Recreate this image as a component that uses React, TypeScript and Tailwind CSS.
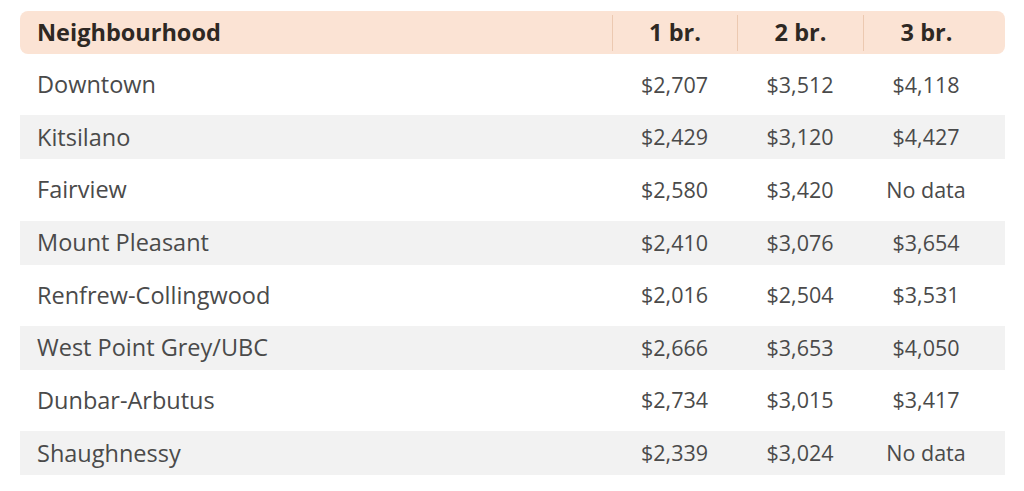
const rows = [
  ['Downtown', '$2,707', '$3,512', '$4,118'],
  ['Kitsilano', '$2,429', '$3,120', '$4,427'],
  ['Fairview', '$2,580', '$3,420', 'No data'],
  ['Mount Pleasant', '$2,410', '$3,076', '$3,654'],
  ['Renfrew-Collingwood', '$2,016', '$2,504', '$3,531'],
  ['West Point Grey/UBC', '$2,666', '$3,653', '$4,050'],
  ['Dunbar-Arbutus', '$2,734', '$3,015', '$3,417'],
  ['Shaughnessy', '$2,339', '$3,024', 'No data'],
]

export default function App() {
  return (
    <div className="w-[1024px] h-[491px] bg-white pt-[11px] pl-5 pr-[19px] font-['Open_Sans',sans-serif] text-[21.5px]">
      <div className="flex flex-col gap-[8.67px]">
        {/* header */}
        <div className="flex h-[43px] items-center rounded-lg bg-[#fbe3d4] pr-4 font-bold text-[#2e2823] text-[23.5px]">
          <div className="flex-1 pl-[17px]">Neighbourhood</div>
          <div className="flex h-[36px] w-[125px] items-center justify-center border-l border-[#ecc9b1]">1 br.</div>
          <div className="flex h-[36px] w-[126px] items-center justify-center border-l border-[#ecc9b1]">2 br.</div>
          <div className="flex h-[36px] w-[126px] items-center justify-center border-l border-[#ecc9b1]">3 br.</div>
        </div>

        {rows.map((r, i) => (
          <div
            key={r[0]}
            className={`flex h-[44px] items-center pr-4 text-[#4a4a4a] ${i % 2 === 1 ? 'bg-[#f2f2f2]' : 'bg-white'}`}
          >
            <div className="flex-1 pl-[17px] text-[23.5px]">{r[0]}</div>
            <div className="w-[125px] text-center">{r[1]}</div>
            <div className="w-[126px] text-center">{r[2]}</div>
            <div className="w-[126px] text-center">{r[3]}</div>
          </div>
        ))}
      </div>
    </div>
  )
}
